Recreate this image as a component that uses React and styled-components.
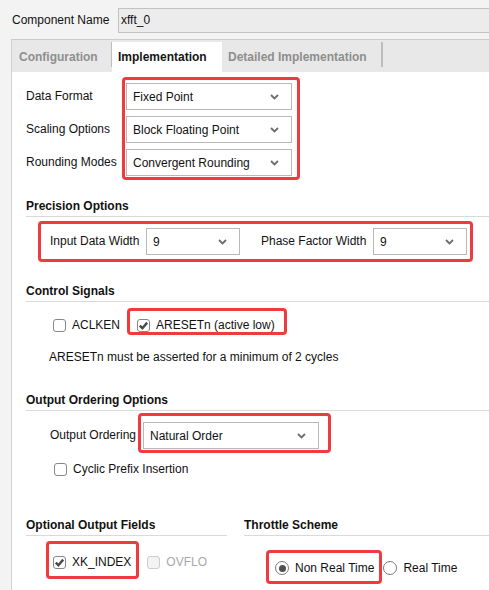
import React from 'react';
import styled, { createGlobalStyle } from 'styled-components';

const GlobalStyle = createGlobalStyle`
  body {
    margin: 0;
    background: #f3f3f3;
    font-family: "Liberation Sans", Arial, sans-serif;
    font-size: 12px;
    color: #111;
  }
`;

const Page = styled.div`
  width: 489px;
  height: 590px;
  display: flex;
  flex-direction: column;
  overflow: hidden;
`;

const NameRow = styled.div`
  height: 39px;
  display: flex;
  align-items: flex-start;
  padding: 8px 0 0 12px;
  box-sizing: border-box;
`;

const NameLabel = styled.span`
  width: 106px;
  line-height: 25px;
  white-space: nowrap;
`;

const NameInput = styled.div`
  flex: 1;
  height: 25px;
  margin-right: -10px;
  box-sizing: border-box;
  border: 1px solid #c2c2c2;
  background: #ececec;
  padding-left: 2px;
  line-height: 23px;
`;

const TabStrip = styled.div`
  height: 33px;
  margin-left: 11px;
  box-sizing: border-box;
  border-top: 1px solid #cbcbcb;
  border-left: 1px solid #d0d0d0;
  background: #e8e8e8;
  display: flex;
  align-items: flex-start;
  padding-top: 2px;
`;

const Tab = styled.div`
  width: ${p => p.$w}px;
  height: 30px;
  box-sizing: border-box;
  padding-left: ${p => p.$pl || 6}px;
  line-height: 30px;
  font-weight: bold;
  white-space: nowrap;
  background: ${p => (p.$active ? '#ffffff' : 'transparent')};
  color: ${p => (p.$active ? '#151515' : '#8e8e8e')};
`;

const TabDivider = styled.div`
  width: ${p => p.$w || 1}px;
  height: 25px;
  background: #bdbdbd;
`;

const Panel = styled.div`
  flex: 1;
  margin-left: 11px;
  border-left: 1px solid #d0d0d0;
  background: #ffffff;
  padding: 5px 0 0 14px;
`;

const SectionTitle = styled.div`
  margin-top: ${p => p.$mt || 0}px;
  font-weight: bold;
  line-height: 14px;
  padding-bottom: 3px;
  border-bottom: 1px solid #d9d9d9;
  white-space: nowrap;
`;

const Highlight = styled.div`
  border: 3px solid #ef3b40;
  border-radius: 4px;
  padding: ${p => p.$pad};
  display: flex;
  flex-direction: ${p => (p.$column ? 'column' : 'row')};
  gap: ${p => (p.$column ? 6 : 0)}px;
  align-items: center;
  flex: none;
`;

const Row = styled.div`
  display: flex;
  align-items: ${p => p.$align || 'center'};
  margin-top: ${p => p.$mt || 0}px;
  padding-left: ${p => p.$pl || 0}px;
`;

const LabelStack = styled.div`
  width: 96px;
  padding-top: 6px;
  display: flex;
  flex-direction: column;
  gap: 6px;
`;

const FieldLabel = styled.span`
  width: ${p => p.$w}px;
  margin-left: ${p => p.$ml || 0}px;
  margin-bottom: ${p => p.$mb || 0}px;
  line-height: 27px;
  white-space: nowrap;
  flex: none;
`;

const SelectBox = styled.div`
  width: ${p => p.$w}px;
  height: 27px;
  box-sizing: border-box;
  border: 1px solid #b9b9b9;
  background: #fff;
  display: flex;
  align-items: center;
  justify-content: space-between;
  padding: 0 12px 0 6px;
  flex: none;
`;

const Chevron = () => (
  <svg width="9" height="6" viewBox="0 0 9 6">
    <path d="M1 1 L4.5 4.5 L8 1" fill="none" stroke="#6d6d6d" strokeWidth="1.8" />
  </svg>
);

const Select = ({ w, value }) => (
  <SelectBox $w={w}>
    <span>{value}</span>
    <Chevron />
  </SelectBox>
);

const OptionItem = styled.label`
  display: flex;
  align-items: center;
  gap: 6px;
  line-height: 14px;
  white-space: nowrap;
  width: ${p => (p.$w ? `${p.$w}px` : 'auto')};
  margin-left: ${p => p.$ml || 0}px;
  margin-bottom: ${p => p.$mb || 0}px;
  color: ${p => (p.$disabled ? '#a8a8a8' : '#111')};
  flex: none;
`;

const Box = styled.span`
  width: 13px;
  height: 13px;
  box-sizing: border-box;
  border: 1px solid ${p => (p.$disabled ? '#cdcdcd' : '#878787')};
  background: ${p => (p.$disabled ? '#f3f3f3' : '#fff')};
  border-radius: 3px;
  display: flex;
  align-items: center;
  justify-content: center;
`;

const Dot = styled.span`
  width: 14px;
  height: 14px;
  box-sizing: border-box;
  border: 1px solid #7a7a7a;
  border-radius: 50%;
  display: flex;
  align-items: center;
  justify-content: center;
  &::after {
    content: '';
    display: ${p => (p.$on ? 'block' : 'none')};
    width: 7px;
    height: 7px;
    border-radius: 50%;
    background: #4f4f4f;
  }
`;

const Check = ({ checked, disabled, children, ...rest }) => (
  <OptionItem $disabled={disabled} {...rest}>
    <Box $disabled={disabled}>
      {checked && (
        <svg width="11" height="11" viewBox="0 0 11 11">
          <path d="M1.8 5.6 L4.4 8.2 L9.2 2.6" fill="none" stroke="#4a4a4a" strokeWidth="2.4" />
        </svg>
      )}
    </Box>
    {children}
  </OptionItem>
);

const Radio = ({ on, children, ...rest }) => (
  <OptionItem {...rest}>
    <Dot $on={on} />
    {children}
  </OptionItem>
);

const Note = styled.div`
  margin-top: 15px;
  padding-left: 23px;
  line-height: 14px;
`;

const Columns = styled.div`
  display: flex;
  margin-top: 42px;
`;

const Column = styled.div`
  width: ${p => (p.$w ? `${p.$w}px` : 'auto')};
  flex: ${p => (p.$w ? 'none' : 1)};
  margin-right: ${p => p.$mr || 0}px;
`;

export default function App() {
  return (
    <Page>
      <GlobalStyle />
      <NameRow>
        <NameLabel>Component Name</NameLabel>
        <NameInput>xfft_0</NameInput>
      </NameRow>

      <TabStrip>
        <Tab $w={99} $pl={7}>Configuration</Tab>
        <TabDivider />
        <Tab $w={110} $active>Implementation</Tab>
        <Tab $w={159}>Detailed Implementation</Tab>
        <TabDivider $w={2} />
      </TabStrip>

      <Panel>
        <Row $align="flex-start">
          <LabelStack>
            <FieldLabel>Data Format</FieldLabel>
            <FieldLabel>Scaling Options</FieldLabel>
            <FieldLabel>Rounding Modes</FieldLabel>
          </LabelStack>
          <Highlight $column $pad="3px 5px 1px 1px">
            <Select w={166} value="Fixed Point" />
            <Select w={166} value="Block Floating Point" />
            <Select w={166} value="Convergent Rounding" />
          </Highlight>
        </Row>

        <SectionTitle $mt={19}>Precision Options</SectionTitle>
        <Row $mt={4} $pl={12}>
          <Highlight $pad="4px 3px 4px 9px">
            <FieldLabel $w={96}>Input Data Width</FieldLabel>
            <Select w={94} value="9" />
            <FieldLabel $w={112} $ml={21}>Phase Factor Width</FieldLabel>
            <Select w={94} value="9" />
          </Highlight>
        </Row>

        <SectionTitle $mt={22}>Control Signals</SectionTitle>
        <Row $mt={6} $pl={27} $align="flex-end">
          <Check $w={74} $mb={3}>ACLKEN</Check>
          <Highlight $pad="7px 9px 0 7px">
            <Check checked>ARESETn (active low)</Check>
          </Highlight>
        </Row>
        <Note>ARESETn must be asserted for a minimum of 2 cycles</Note>

        <SectionTitle $mt={29}>Output Ordering Options</SectionTitle>
        <Row $mt={2} $pl={24} $align="flex-end">
          <FieldLabel $w={88} $mb={4}>Output Ordering</FieldLabel>
          <Highlight $pad="6px 9px 1px 2px">
            <Select w={176} value="Natural Order" />
          </Highlight>
        </Row>
        <Row $mt={9} $pl={28}>
          <Check>Cyclic Prefix Insertion</Check>
        </Row>

        <Columns>
          <Column $w={201} $mr={17}>
            <SectionTitle>Optional Output Fields</SectionTitle>
            <Row $mt={5} $pl={20} $align="flex-end">
              <Highlight $pad="11px 5px 7px 4px">
                <Check checked>XK_INDEX</Check>
              </Highlight>
              <Check disabled $ml={8} $mb={10}>OVFLO</Check>
            </Row>
          </Column>
          <Column>
            <SectionTitle>Throttle Scheme</SectionTitle>
            <Row $mt={14} $pl={22} $align="flex-end">
              <Highlight $pad="8px 5px 6px 6px">
                <Radio on>Non Real Time</Radio>
              </Highlight>
              <Radio $ml={1} $mb={9}>Real Time</Radio>
            </Row>
          </Column>
        </Columns>
      </Panel>
    </Page>
  );
}
